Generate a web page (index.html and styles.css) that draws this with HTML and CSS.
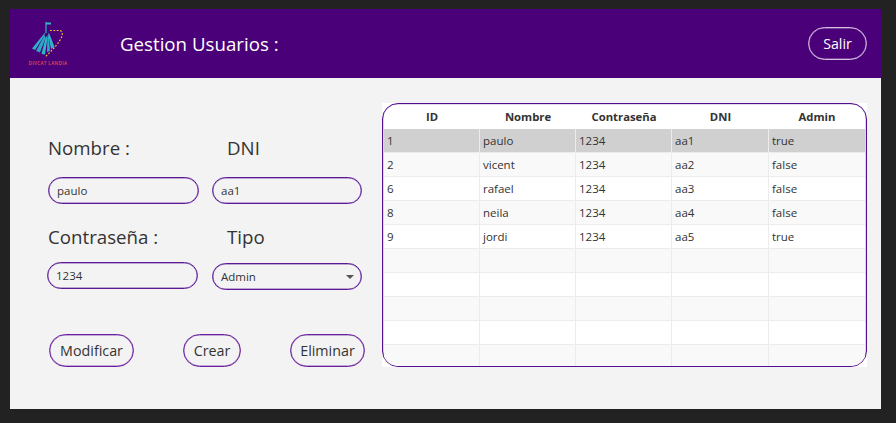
FILE: index.html
```html
<!DOCTYPE html>
<html lang="es">
<head>
<meta charset="utf-8">
<title>Gestion Usuarios</title>
<link rel="stylesheet" href="styles.css">
</head>
<body>
<div class="window">
  <header class="header">
    <svg class="logo" viewBox="20 16 60 55" width="60" height="55" aria-hidden="true">
      <path d="M46 22V33" stroke="#2fb4c8" stroke-width="1.2" fill="none"/>
      <path d="M46 22.5H51V24.5H46Z" fill="#2fb4c8"/>
      <path d="M45.5 32L32 48.5L35 50L44 36Z" fill="#2fb4c8"/>
      <path d="M44.5 35L36 51L40 52.5L45.5 38Z" fill="#2aa6c4"/>
      <path d="M46 36L41.5 54L45 54.5L47.5 38Z" fill="#2fb4c8"/>
      <path d="M47.5 35L47 52L50 51L49 36Z" fill="#2aa6c4"/>
      <path d="M48 33L51 49L54.5 47L49.5 34Z" fill="#2fb4c8"/>
      <path d="M50 30.5H60.5Q63 33 62 36.5Q58 45 45 57" fill="none" stroke="#f2c230" stroke-width="1.2" stroke-dasharray="1.8 1.6"/>
      <text class="logo-text" x="28.5" y="65">DIVCAT LANDIA</text>
    </svg>
    <h1 class="title">Gestion Usuarios :</h1>
    <button class="exit" type="button">Salir</button>
  </header>
  <main class="main">
    <section class="form">
      <div class="grid">
        <label class="label">Nombre :</label>
        <label class="label label-b">DNI</label>
        <input class="input input-a" value="paulo">
        <input class="input" value="aa1">
        <label class="label label-2">Contraseña :</label>
        <label class="label label-b label-2">Tipo</label>
        <input class="input input-c" value="1234">
        <div class="select-wrap">
          <select class="input select"><option>Admin</option></select>
        </div>
      </div>
      <div class="actions">
        <button class="btn btn-edit" type="button">Modificar</button>
        <button class="btn btn-new" type="button">Crear</button>
        <button class="btn btn-del" type="button">Eliminar</button>
      </div>
    </section>
    <section class="table-back">
      <div class="table-frame">
        <table class="table">
          <thead>
            <tr><th>ID</th><th>Nombre</th><th>Contraseña</th><th>DNI</th><th>Admin</th></tr>
          </thead>
          <tbody>
            <tr class="selected"><td>1</td><td>paulo</td><td>1234</td><td>aa1</td><td>true</td></tr>
            <tr><td>2</td><td>vicent</td><td>1234</td><td>aa2</td><td>false</td></tr>
            <tr><td>6</td><td>rafael</td><td>1234</td><td>aa3</td><td>false</td></tr>
            <tr><td>8</td><td>neila</td><td>1234</td><td>aa4</td><td>false</td></tr>
            <tr><td>9</td><td>jordi</td><td>1234</td><td>aa5</td><td>true</td></tr>
            <tr><td></td><td></td><td></td><td></td><td></td></tr>
            <tr><td></td><td></td><td></td><td></td><td></td></tr>
            <tr><td></td><td></td><td></td><td></td><td></td></tr>
            <tr><td></td><td></td><td></td><td></td><td></td></tr>
            <tr><td></td><td></td><td></td><td></td><td></td></tr>
          </tbody>
        </table>
      </div>
    </section>
  </main>
</div>
</body>
</html>
```
FILE: styles.css
```css
* { box-sizing: border-box; }
html, body { margin: 0; height: 100%; }
body {
  background: #222222;
  padding: 9px 15px 14px 10px;
  font-family: "Open Sans", "Noto Sans", sans-serif;
  color: #333333;
  overflow: hidden;
}
.window { width: 871px; height: 400px; display: flex; flex-direction: column; background: #f3f3f3; }
.header {
  height: 69px;
  background: #4a0078;
  display: flex;
  align-items: center;
  padding: 0 14px 0 10px;
}
.logo { display: block; flex: none; }
.logo-text { font-size: 4.6px; font-weight: 600; fill: #ee4a52; letter-spacing: 0.35px; font-family: "Open Sans", sans-serif; }
.title {
  margin: 0 0 0 40px;
  font-size: 18.7px;
  font-weight: 400;
  color: #ffffff;
}
.exit {
  margin-left: auto;
  width: 59px;
  height: 33px;
  border: 1px solid #d3bfe0;
  box-shadow: inset 0 0 0 0.5px rgba(211, 191, 224, 0.7);
  border-radius: 17px;
  background: transparent;
  color: #ffffff;
  font: 400 14.2px "Open Sans", sans-serif;
  padding: 0;
}
.main { flex: 1; display: flex; align-items: flex-start; padding-left: 37px; min-height: 0; }
.form { width: 335px; padding-top: 56px; }
.grid { display: grid; grid-template-columns: 165px 150px; }
.label { font-size: 18.7px; line-height: 28px; height: 28px; padding-left: 1px; color: #333333; }
.label-b { padding-left: 15px; }
.label-2 { margin-top: 19px; }
.input {
  display: block;
  width: 150px;
  height: 27px;
  margin-top: 15px;
  border: 1px solid #5a1a96;
  box-shadow: inset 0 0 0 0.5px rgba(90, 26, 150, 0.7);
  border-radius: 14px;
  background: #f3f3f3;
  padding: 0 8px;
  font: 400 11.5px "Open Sans", sans-serif;
  color: #333333;
  outline: none;
}
.input-a { width: 151px; margin-left: 1px; }
.input-c { width: 151px; margin-top: 11px; }
.select-wrap { position: relative; margin-top: 12px; }
.select-wrap::after {
  content: "";
  position: absolute;
  right: 8px;
  top: 12px;
  border-left: 4px solid transparent;
  border-right: 4px solid transparent;
  border-top: 4px solid #555555;
}
.select { margin-top: 0; appearance: none; -webkit-appearance: none; }
.actions { display: flex; gap: 49px; margin-top: 44px; padding-left: 2px; }
.btn {
  height: 33px;
  padding: 0;
  border: 1px solid #6a1f9e;
  box-shadow: inset 0 0 0 0.5px rgba(106, 31, 158, 0.7);
  border-radius: 17px;
  background: #f3f3f3;
  color: #333333;
  font: 400 14.3px "Open Sans", sans-serif;
}
.btn-edit { width: 85px; }
.btn-new { width: 58px; }
.btn-del { width: 75px; }
.table-back { width: 485px; height: 264px; margin-top: 25px; background: #ffffff; flex: none; }
.table-frame {
  width: 100%;
  height: 100%;
  padding-left: 1px;
  border: 1px solid #52108f;
  box-shadow: inset 0 0 0 0.3px rgba(82, 16, 143, 0.6);
  border-radius: 16px;
  overflow: hidden;
  background: #ffffff;
}
.table { width: 481px; border-collapse: separate; border-spacing: 0; table-layout: fixed; font-size: 11.5px; color: #333333; }
.table th { width: 96px; height: 25px; font-size: 11.3px; font-weight: 700; text-align: center; padding: 0; }
.table th:nth-child(4) { width: 97px; }
.table td { height: 24px; padding: 0 0 0 3px; border-right: 1px solid #ececec; border-bottom: 1px solid #ececec; }
.table td:last-child { border-right: 0; }
.table tbody tr:nth-child(even) { background: #f9f9f9; }
.table tbody tr.selected { background: #d0d0d0; }
```
